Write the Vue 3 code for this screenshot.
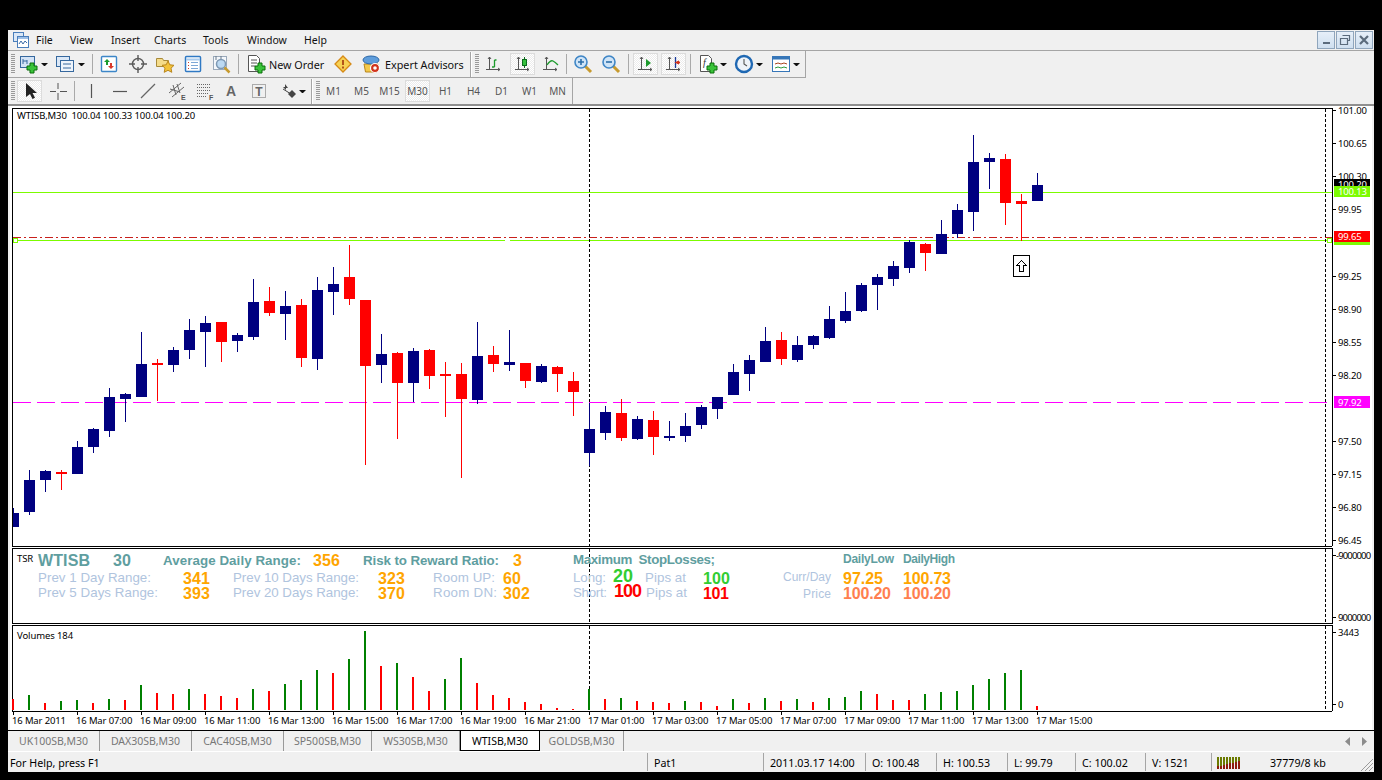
<template>
  <div class="terminal">
    <!-- menu -->
    <div class="menubar">
      <svg class="appicon" width="16" height="16" viewBox="0 0 16 16">
        <rect x="0.5" y="0.5" width="10" height="9" fill="#dbe8f7" stroke="#4a7ebb" />
        <rect x="4.5" y="4.5" width="11" height="11" fill="#fff" stroke="#4a7ebb" />
        <rect x="5" y="5" width="10" height="2" fill="#9dbfe6" />
        <path d="M6 12l2-3 2 3 2-3 2 2" fill="none" stroke="#3c6ca8" />
      </svg>
      <span v-for="m in menu" :key="m.t" class="menuitem" :style="m.style">{{ m.t }}</span>
      <div class="winbtns">
        <div class="winbtn"><i class="glyph-min"></i></div>
        <div class="winbtn">
          <svg width="12" height="12" viewBox="0 0 12 12">
            <path d="M3.5 1.5h7v5h-2M1.5 4.5h7v6h-7z" fill="none" stroke="#5b6b7c" stroke-width="1.2" />
          </svg>
        </div>
        <div class="winbtn">
          <svg width="12" height="12" viewBox="0 0 12 12">
            <path d="M2 2l8 8M10 2l-8 8" stroke="#5b6b7c" stroke-width="2.2" />
          </svg>
        </div>
      </div>
    </div>

    <!-- toolbars -->
    <div class="toolrow row1">
      <template v-for="(it, i) in row1" :key="i">
        <span v-if="it.label" class="tool-label" :style="it.style">{{ it.label }}</span>
        <div v-else :class="it.cls" :style="it.style">
          <svg v-if="it.icon" width="20" height="20" viewBox="0 0 20 20" v-html="icons[it.icon]"></svg>
        </div>
      </template>
    </div>
    <div class="toolrow row2">
      <template v-for="(it, i) in row2" :key="i">
        <div v-if="it.period" :class="it.cls" :style="it.style">{{ it.period }}</div>
        <div v-else :class="it.cls" :style="it.style">
          <svg v-if="it.icon" width="20" height="20" viewBox="0 0 20 20" v-html="icons[it.icon]"></svg>
        </div>
      </template>
    </div>

    <!-- charts -->
    <div class="charts">
      <svg class="pane" width="1362" height="441" viewBox="10 106 1362 441" shape-rendering="crispEdges">
        <text class="small" x="17" y="119">WTISB,M30&#160;&#160;100.04 100.33 100.04 100.20</text>
        <rect x="13" y="192" width="1319" height="1" fill="#7cfc00" />
        <rect x="13" y="240" width="1319" height="1" fill="#7cfc00" />
        <rect x="505" y="240" width="5" height="1" fill="#fff" />
        <rect x="13.5" y="238.5" width="4" height="4" fill="#fff" stroke="#7cfc00" />
        <rect x="1327.5" y="238.5" width="4" height="4" fill="#fff" stroke="#7cfc00" />
        <path d="M13 237.5H1332" stroke="#c8201c" stroke-dasharray="8 3 2 3" />
        <path d="M13 402.5H1332" stroke="#ff00ff" stroke-dasharray="18 6" />
        <path d="M589.5 109V546M1325.5 109V546" stroke="#000" stroke-dasharray="3 2" />

        <g v-for="(c, i) in candles" :key="i" :fill="c[4] === 'b' ? '#000080' : '#ff0000'">
          <rect :x="13 + 16 * i" :y="c[0]" width="1" :height="c[3] - c[0]" />
          <rect :x="8 + 16 * i" :y="c[1]" width="11" :height="c[2] - c[1]" />
        </g>

        <rect x="1013.5" y="255.5" width="16" height="21" fill="#fff" stroke="#000" />
        <path d="M1021.5 260.5l5 5h-3v6h-4v-6h-3z" fill="#fff" stroke="#000" />

        <rect x="10" y="106" width="3" height="441" fill="#fff" />
        <rect x="12" y="108" width="1320" height="1" />
        <rect x="12" y="108" width="1" height="438" />
        <rect x="1332" y="108" width="1" height="438" />
        <rect x="12" y="546" width="1320" height="1" />

        <g v-for="p in prices" :key="p.t">
          <rect x="1333" :y="p.y" width="3" height="1" />
          <text class="axis" x="1338" :y="p.y + 4">{{ p.t }}</text>
        </g>
        <rect x="1334" y="179" width="36" height="9" fill="#000" />
        <text class="axis on-dark" x="1338" y="188">100.20</text>
        <rect x="1334" y="186" width="36" height="11" fill="#7cfc00" />
        <text class="axis on-dark" x="1338" y="195">100.13</text>
        <rect x="1334" y="240" width="36" height="5" fill="#7cfc00" />
        <rect x="1334" y="231" width="36" height="11" fill="#ff0000" />
        <text class="axis on-dark" x="1338" y="240">99.65</text>
        <rect x="1334" y="396" width="36" height="12" fill="#ff00ff" />
        <text class="axis on-dark" x="1338" y="406">97.92</text>
      </svg>

      <svg class="pane" width="1362" height="78" viewBox="10 547 1362 78" shape-rendering="crispEdges">
        <rect x="12" y="548" width="1320" height="1" />
        <rect x="12" y="548" width="1" height="76" />
        <rect x="1332" y="548" width="1" height="76" />
        <rect x="12" y="623" width="1320" height="1" />
        <path d="M589.5 549V623M1325.5 549V623" stroke="#000" stroke-dasharray="3 2" />
        <text class="small" x="17" y="562">TSR</text>
        <text
          v-for="l in labels"
          :key="l.t + l.x"
          :class="l.c"
          :x="l.x"
          :y="l.y"
          :textLength="l.w"
        >{{ l.t }}</text>
        <rect x="1333" y="555" width="3" height="1" />
        <text class="axis" x="1336" y="559" textLength="35">-9000000</text>
        <rect x="1333" y="617" width="3" height="1" />
        <text class="axis" x="1338" y="621" textLength="33">9000000</text>
      </svg>

      <svg class="pane" width="1362" height="105" viewBox="10 625 1362 105" shape-rendering="crispEdges">
        <rect x="12" y="625" width="1320" height="1" />
        <rect x="12" y="625" width="1" height="86" />
        <rect x="1332" y="625" width="1" height="86" />
        <rect x="12" y="711" width="1320" height="1" />
        <path d="M589.5 626V711M1325.5 626V711" stroke="#000" stroke-dasharray="3 2" />
        <text class="small" x="17" y="639">Volumes 184</text>
        <rect
          v-for="(v, i) in volumes"
          :key="i"
          :x="12 + 16 * i"
          :y="710 - v[0]"
          width="2"
          :height="v[0]"
          :fill="v[1] === 'g' ? '#008000' : '#ff0000'"
        />
        <g v-for="(t, i) in times" :key="t">
          <rect :x="13 + 64 * i" y="712" width="1" height="3" />
          <text class="axis" :x="12 + 64 * i" y="724">{{ t }}</text>
        </g>
        <rect x="1333" y="632" width="3" height="1" />
        <text class="axis" x="1338" y="636">3443</text>
        <rect x="1333" y="704" width="3" height="1" />
        <text class="axis" x="1338" y="708">0</text>
      </svg>
    </div>

    <!-- symbol tabs -->
    <div class="tabs">
      <div v-for="t in tabs" :key="t.t" :class="['tab', { active: t.active }]" :style="{ width: t.w + 'px' }">{{ t.t }}</div>
      <div class="tabscroll">
        <svg width="6" height="9" viewBox="0 0 6 9"><path d="M5 0v9L0 4.5z" fill="#8c8c8c" /></svg>
        <svg width="6" height="9" viewBox="0 0 6 9"><path d="M1 0v9l5-4.5z" fill="#8c8c8c" /></svg>
      </div>
    </div>

    <!-- status bar -->
    <div class="status">
      <div v-for="s in status" :key="s.t" class="cell" :style="{ width: s.w + 'px' }">{{ s.t }}</div>
      <div class="cell conn">
        <svg width="26" height="13" viewBox="0 0 26 13" shape-rendering="crispEdges">
          <g v-for="n in 8" :key="n">
            <rect :x="(n - 1) * 3" y="1" width="2" height="12" fill="#6b7a00" />
            <rect :x="(n - 1) * 3" :y="11 - Math.round(n * 0.7)" width="2" :height="2 + Math.round(n * 0.7)" fill="#8e1c0c" />
          </g>
        </svg>
      </div>
      <div class="memory">37779/8 kb</div>
      <svg class="grip" width="16" height="16" viewBox="0 0 16 16">
        <path d="M15 3L3 15M15 7L7 15M15 11l-4 4" stroke="#9a9a9a" />
      </svg>
    </div>
  </div>
</template>

<script setup>
// lay items out left to right, from their left edge on the screen
const place = (items, start) => {
  let right = start
  return items.map((it) => {
    const w = it.w ?? 20
    const style = { marginLeft: it.l - right + 'px', width: w + 'px' }
    right = it.l + w
    return { ...it, style }
  })
}

const menu = place(
  [
    { t: 'File', l: 36, w: 15 },
    { t: 'View', l: 70, w: 22 },
    { t: 'Insert', l: 111, w: 25 },
    { t: 'Charts', l: 154, w: 30 },
    { t: 'Tools', l: 203, w: 26 },
    { t: 'Window', l: 247, w: 38 },
    { t: 'Help', l: 304, w: 21 }
  ],
  32
)

const grip = (l) => ({ cls: 'grip-bar', l, w: 4 })
const sep = (l) => ({ cls: 'sep', l, w: 1 })
const drop = (l) => ({ cls: 'drop', l, w: 7 })
const btn = (icon, l) => ({ cls: 'btn', icon, l })
const checked = (icon, l) => ({ cls: 'btn checked', icon, l, w: 25 })

const row1 = place(
  [
    grip(11),
    btn('newChart', 19), drop(41),
    btn('profiles', 55), drop(78),
    sep(92),
    btn('market', 99), btn('nav', 128), btn('fav', 155), btn('term', 183), btn('tester', 212),
    sep(238),
    btn('order', 246),
    { label: 'New Order', l: 269, w: 60 },
    btn('warn', 333),
    btn('expert', 361),
    { label: 'Expert Advisors', l: 385, w: 82 },
    { cls: 'edge', l: 470, w: 2 },
    grip(475),
    btn('bars', 484), checked('candle', 510), btn('line', 541),
    sep(566),
    btn('zoomIn', 573), btn('zoomOut', 601),
    sep(628),
    checked('auto', 633), checked('shift', 661),
    sep(690),
    btn('indic', 698), drop(720),
    btn('clock', 734), drop(756),
    btn('tmpl', 771), drop(793)
  ],
  8
)

const periods = ['M1', 'M5', 'M15', 'M30', 'H1', 'H4', 'D1', 'W1', 'MN']

const row2 = place(
  [
    grip(11),
    checked('cursor', 17),
    btn('cross', 48),
    sep(74),
    btn('vline', 81), btn('hline', 110), btn('trend', 138), btn('channel', 167), btn('fibo', 195),
    btn('textA', 221), btn('label', 249), btn('arrows', 279), drop(299),
    { cls: 'edge', l: 311, w: 2 },
    grip(316),
    ...periods.map((p, i) => ({
      period: p,
      cls: p === 'M30' ? 'period checked' : 'period',
      l: 321 + 28 * i,
      w: 25
    }))
  ],
  8
)

const plus = (x, y) =>
  `<path d="M${x - 2} ${y - 5}h4v3h3v4h-3v3h-4v-3h-3v-4h3z" fill="#39c339" stroke="#0b6e0b"/>`
const axes = '<path d="M5.500 3v13M2 15.500h14M4 5l1.500-2L7 5M14 14l2 1.500-2 1.500" fill="none" stroke="#555"/>'
const lens = (sign) =>
  `<path d="M12 12l6 6" stroke="#c79a2e" stroke-width="3"/><circle cx="8" cy="8" r="6" fill="#cfe4f7" stroke="#3f86c6" stroke-width="1.6"/><path d="${sign}" stroke="#2c6ea8" stroke-width="1.6"/>`

const icons = {
  newChart: `<rect x="1.5" y="2.5" width="14" height="11" fill="#d3e3f6" stroke="#36689e"/><path d="M4 5v5M8 6v4M4 7h4" stroke="#36689e"/>${plus(13, 14)}`,
  profiles: `<rect x="1.5" y="2.5" width="13" height="10" fill="#dbe8f7" stroke="#36689e"/><rect x="5.5" y="6.5" width="13" height="11" fill="#eef4fb" stroke="#36689e"/><path d="M8 10h8M8 14h8" stroke="#36689e"/>`,
  market: `<rect x="2.5" y="2.5" width="15" height="15" rx="1" fill="#fff" stroke="#3c86c8" stroke-width="1.4"/><path d="M8 5l3 3H9v3H7V8H5z" fill="#1a9a2c"/><path d="M12 15l-3-3h2V9h2v3h2z" fill="#d8392a"/>`,
  nav: '<circle cx="10" cy="10" r="5.5" fill="none" stroke="#5a5a5a" stroke-width="1.4"/><path d="M10 1v6M10 13v6M1 10h6M13 10h6" stroke="#5a5a5a" stroke-width="1.4"/>',
  fav: '<path d="M1.5 4.5h6l1 2h5v6h-12z" fill="#f5dc8a" stroke="#a88a3a"/><path d="M13 7l1.8 3.8 4.2.5-3 2.9.8 4.1-3.8-2-3.8 2 .8-4.1-3-2.9 4.2-.5z" fill="#f3c33a" stroke="#b9861c"/>',
  term: '<rect x="2.5" y="2.5" width="15" height="15" rx="1" fill="#fff" stroke="#2f79c4" stroke-width="1.5"/><path d="M3 5.5h14" stroke="#a9cbed" stroke-width="2"/><path d="M8 8.5h7M8 11.5h7M8 14.5h7" stroke="#7ea8d6"/><path d="M5 8.5h1M5 11.5h1M5 14.5h1" stroke="#d23a2a"/>',
  tester: '<rect x="1.5" y="2.5" width="13" height="13" fill="#f4f7fb" stroke="#9aa9ba"/><path d="M4 2v4M9 2v4" stroke="#6a7a8a"/><circle cx="9" cy="10" r="4.5" fill="#bcd9f2" stroke="#7d98b3" stroke-width="1.5"/><path d="M12.5 13.5l5 5" stroke="#c79a2e" stroke-width="2.5"/>',
  order: `<path d="M2.5 1.5h8l3 3v13h-11z" fill="#fff" stroke="#555"/><path d="M5 6h6M5 9h6M5 12h4" stroke="#555"/>${plus(14, 14)}`,
  warn: '<path d="M10 2l8 8-8 8-8-8z" fill="#f7d154" stroke="#d68a16" stroke-width="1.3"/><path d="M10 6v5" stroke="#b3541a" stroke-width="2"/><path d="M10 12.5v2" stroke="#b3541a" stroke-width="2"/>',
  expert: '<path d="M3 10h14l-1.5 8h-11z" fill="#f3c94b" stroke="#b9861c"/><ellipse cx="10" cy="6" rx="8" ry="4" fill="#5f9ddb" stroke="#2b67a8"/><circle cx="14" cy="14" r="4.5" fill="#d1341c" stroke="#fff" stroke-width="1.2"/><circle cx="14" cy="14" r="1.8" fill="#fff"/>',
  bars: `${axes}<path d="M10.500 13V6M10.500 13H8M10.500 6h2" fill="none" stroke="#1c9a2c" stroke-width="1.3"/>`,
  candle: `${axes}<path d="M11.500 3v11" stroke="#0c6e1c"/><rect x="9.500" y="5.500" width="4" height="6" fill="#35c03d" stroke="#0c6e1c"/>`,
  line: `${axes}<path d="M6 11c2-3 4-5 6-4s3 2 5 4" fill="none" stroke="#1c9a2c" stroke-width="1.3"/>`,
  zoomIn: lens('M5 8h6M8 5v6'),
  zoomOut: lens('M5 8h6'),
  auto: `${axes}<path d="M10 5l5 4-5 4z" fill="#1c9a2c"/>`,
  shift: `${axes}<path d="M11.500 3v11" stroke="#1a3a9a" stroke-width="1.3"/><path d="M12 8.500h4M15 7l-3 1.500 3 1.500" fill="none" stroke="#d1341c" stroke-width="1.3"/>`,
  indic: `<path d="M2.5 1.5h8l3 3v13h-11z" fill="#fff" stroke="#555"/><text x="5" y="12" font-size="10" font-style="italic" font-family="Liberation Serif, serif" fill="#333">f</text>${plus(14, 14)}`,
  clock: '<circle cx="10" cy="10" r="8" fill="#eef3f9" stroke="#1f68b3" stroke-width="2.4"/><path d="M10 5v5l3 2" fill="none" stroke="#555" stroke-width="1.1"/>',
  tmpl: '<rect x="1.5" y="2.5" width="17" height="15" fill="#fff" stroke="#3676b8"/><rect x="2" y="3" width="16" height="2.5" fill="#3676b8"/><path d="M4 10l3-1 3 1 3-1 3 1" fill="none" stroke="#a8441e"/><path d="M4 14l3-1 3 1 3-1 3 1" fill="none" stroke="#2c9a3a"/>',
  cursor: '<path d="M6 2v14l4-3 2.5 5 2.5-1.2L12.500 12H17z" fill="#222"/>',
  cross: '<path d="M10 2v6M10 12v7M2 10.500h6M12 10.500h7" stroke="#555"/>',
  vline: '<path d="M10.500 3v14" stroke="#555" stroke-width="1.2"/>',
  hline: '<path d="M3 10.500h14" stroke="#555" stroke-width="1.2"/>',
  trend: '<path d="M3 17L17 3" stroke="#666" stroke-width="1.2"/>',
  channel: '<path d="M2 12L14 2M5 16L17 6M6 4l3 10M10 3l3 9M3 8l10 3" stroke="#666" fill="none"/><text x="14" y="19" font-size="7" font-family="Liberation Sans, sans-serif" font-weight="700" fill="#555">E</text>',
  fibo: '<path d="M2 3.500h13M2 6.500h13M2 9.500h13M2 12.500h11M2 15.500h9" stroke="#666" stroke-dasharray="1 1"/><text x="14" y="19" font-size="7" font-family="Liberation Sans, sans-serif" font-weight="700" fill="#555">F</text>',
  textA: '<text x="10" y="15" text-anchor="middle" font-size="14" font-weight="700" font-family="Liberation Sans, sans-serif" fill="#666">A</text>',
  label: '<rect x="3.500" y="3.500" width="13" height="13" fill="none" stroke="#666" stroke-dasharray="1 1"/><text x="10" y="15" text-anchor="middle" font-size="12" font-weight="700" font-family="Liberation Sans, sans-serif" fill="#666">T</text>',
  arrows: '<path d="M6 3l3 4H7v2L4 6h2z" fill="#444"/><path d="M4 8l8 5" stroke="#444"/><path d="M13 9l4 4-4 4-4-4z" fill="#444"/>'
}

// candles: wick top, body top, body bottom, wick bottom, colour
const candles = [
  [508, 513, 527, 527, 'b'], [470, 480, 512, 515, 'b'], [470, 471, 480, 492, 'b'], [470, 472, 474, 490, 'r'],
  [441, 447, 474, 474, 'b'], [428, 429, 447, 453, 'b'], [388, 397, 431, 437, 'b'], [393, 394, 399, 422, 'b'],
  [332, 364, 397, 397, 'b'], [359, 363, 365, 401, 'r'], [347, 350, 365, 372, 'b'], [319, 330, 350, 359, 'b'],
  [316, 323, 332, 367, 'b'], [322, 322, 342, 362, 'r'], [333, 335, 341, 352, 'b'], [279, 302, 337, 340, 'b'],
  [287, 301, 313, 316, 'r'], [291, 306, 314, 340, 'b'], [299, 305, 358, 367, 'r'], [277, 290, 359, 370, 'b'],
  [267, 284, 292, 315, 'b'], [245, 277, 299, 305, 'r'], [300, 300, 366, 465, 'r'], [334, 354, 365, 383, 'b'],
  [352, 353, 383, 439, 'r'], [348, 351, 383, 402, 'b'], [349, 350, 376, 389, 'r'], [362, 374, 376, 417, 'r'],
  [363, 374, 399, 478, 'r'], [322, 356, 400, 404, 'b'], [346, 355, 364, 372, 'r'], [330, 362, 365, 371, 'b'],
  [363, 363, 381, 388, 'r'], [364, 366, 382, 383, 'b'], [366, 367, 374, 392, 'r'], [372, 381, 392, 416, 'r'],
  [403, 429, 453, 466, 'b'], [406, 412, 433, 440, 'b'], [399, 413, 438, 441, 'r'], [416, 419, 439, 440, 'b'],
  [411, 420, 437, 455, 'r'], [421, 436, 438, 441, 'b'], [413, 426, 436, 442, 'b'], [405, 407, 425, 429, 'b'],
  [397, 397, 409, 419, 'b'], [364, 372, 395, 395, 'b'], [355, 360, 374, 391, 'b'], [327, 341, 362, 362, 'b'],
  [332, 340, 359, 365, 'r'], [336, 345, 360, 362, 'b'], [335, 336, 345, 349, 'b'], [306, 319, 338, 339, 'b'],
  [292, 311, 321, 323, 'b'], [283, 285, 311, 312, 'b'], [274, 277, 285, 310, 'b'], [261, 266, 279, 286, 'b'],
  [240, 242, 268, 273, 'b'], [243, 244, 253, 271, 'r'], [220, 234, 254, 254, 'b'], [204, 210, 234, 238, 'b'],
  [135, 162, 212, 231, 'b'], [153, 158, 162, 189, 'b'], [154, 159, 203, 225, 'r'], [194, 201, 204, 241, 'r'],
  [173, 185, 201, 201, 'b']
]

const volHeights = [
  11, 15, 7, 9, 10, 7, 11, 10, 25, 17, 16, 21, 16, 14, 12, 21, 19, 26, 30, 40, 37, 51, 79, 44, 47, 33, 19, 31, 52, 27, 15, 12, 8,
  6, 2, 1, 21, 11, 12, 9, 8, 7, 9, 8, 4, 11, 7, 12, 9, 11, 8, 12, 13, 19, 16, 10, 10, 16, 18, 19, 25, 31, 37, 40, 4
]
const volColors = 'rgrggrgrgrrgrrrgrgggrggrgrrgg' + 'rrrrrrr' + 'grgrrrgrrgrgrgrgggrrrgggggggr'
const volumes = volHeights.map((h, i) => [h, volColors[i]])

const prices = [
  '101.00', '100.65', '100.30', '99.95', '', '99.25', '98.90', '98.55', '98.20', '', '97.50', '97.15', '96.80', '96.45'
]
  .map((t, i) => ({ t, y: Math.round(110 + 33.1 * i) }))
  .filter((p) => p.t)

const times = [
  '16 Mar 2011', '16 Mar 07:00', '16 Mar 09:00', '16 Mar 11:00', '16 Mar 13:00', '16 Mar 15:00', '16 Mar 17:00', '16 Mar 19:00',
  '16 Mar 21:00', '17 Mar 01:00', '17 Mar 03:00', '17 Mar 05:00', '17 Mar 07:00', '17 Mar 09:00', '17 Mar 11:00', '17 Mar 13:00',
  '17 Mar 15:00'
]

// the TSR indicator writes these as text objects on the sub window
const labels = [
  { t: 'WTISB', x: 38, y: 566, w: 52, c: 'head big' },
  { t: '30', x: 113, y: 566, w: 18, c: 'head big' },
  { t: 'Average Daily Range:', x: 163, y: 565, w: 138, c: 'head' },
  { t: '356', x: 313, y: 566, w: 27, c: 'num orange' },
  { t: 'Risk to Reward Ratio:', x: 363, y: 565, w: 136, c: 'head' },
  { t: '3', x: 513, y: 566, w: 9, c: 'num orange' },
  { t: 'Prev 1 Day Range:', x: 38, y: 582, w: 113, c: 'pale' },
  { t: '341', x: 183, y: 584, w: 27, c: 'num orange' },
  { t: 'Prev 10 Days Range:', x: 233, y: 582, w: 126, c: 'pale' },
  { t: '323', x: 378, y: 584, w: 27, c: 'num orange' },
  { t: 'Room UP:', x: 433, y: 582, w: 62, c: 'pale' },
  { t: '60', x: 503, y: 584, w: 18, c: 'num orange' },
  { t: 'Prev 5 Days Range:', x: 38, y: 597, w: 120, c: 'pale' },
  { t: '393', x: 183, y: 599, w: 27, c: 'num orange' },
  { t: 'Prev 20 Days Range:', x: 233, y: 597, w: 126, c: 'pale' },
  { t: '370', x: 378, y: 599, w: 27, c: 'num orange' },
  { t: 'Room DN:', x: 433, y: 597, w: 64, c: 'pale' },
  { t: '302', x: 503, y: 599, w: 27, c: 'num orange' },
  { t: 'Maximum\u00a0 StopLosses;', x: 573, y: 564, w: 142, c: 'head' },
  { t: 'Long:', x: 573, y: 582, w: 33, c: 'pale' },
  { t: '20', x: 613, y: 582, w: 20, c: 'num large green' },
  { t: 'Pips at', x: 645, y: 582, w: 41, c: 'pale' },
  { t: '100', x: 703, y: 584, w: 27, c: 'num green' },
  { t: 'Short:', x: 573, y: 597, w: 34, c: 'pale' },
  { t: '100', x: 614, y: 597, w: 28, c: 'num large red' },
  { t: 'Pips at', x: 646, y: 597, w: 41, c: 'pale' },
  { t: '101', x: 703, y: 599, w: 26, c: 'num red' },
  { t: 'DailyLow', x: 843, y: 563, w: 51, c: 'head sm' },
  { t: 'DailyHigh', x: 903, y: 563, w: 52, c: 'head sm' },
  { t: 'Curr/Day', x: 783, y: 581, w: 48, c: 'pale sm' },
  { t: '97.25', x: 843, y: 584, w: 40, c: 'num orange' },
  { t: '100.73', x: 903, y: 584, w: 48, c: 'num orange' },
  { t: 'Price', x: 803, y: 598, w: 28, c: 'pale sm' },
  { t: '100.20', x: 843, y: 599, w: 48, c: 'num coral' },
  { t: '100.20', x: 903, y: 599, w: 48, c: 'num coral' }
]

const tabs = [
  { t: 'UK100SB,M30', w: 92 },
  { t: 'DAX30SB,M30', w: 92 },
  { t: 'CAC40SB,M30', w: 92 },
  { t: 'SP500SB,M30', w: 88 },
  { t: 'WS30SB,M30', w: 88 },
  { t: 'WTISB,M30', w: 80, active: true },
  { t: 'GOLDSB,M30', w: 84 }
]

const status = [
  { t: 'For Help, press F1', w: 640 },
  { t: 'Pat1', w: 116 },
  { t: '2011.03.17 14:00', w: 102 },
  { t: 'O: 100.48', w: 71 },
  { t: 'H: 100.53', w: 71 },
  { t: 'L: 99.79', w: 68 },
  { t: 'C: 100.02', w: 70 },
  { t: 'V: 1521', w: 66 }
]
</script>

<style>
html,
body {
  margin: 0;
  background: #000;
  overflow: hidden;
}
</style>

<style scoped>
.terminal {
  position: relative;
  width: 1366px;
  height: 742px;
  margin: 30px 0 0 8px;
  background: #f0f0f0;
  font-family: "Noto Sans", sans-serif;
  font-size: 10.5px;
  color: #111;
  overflow: hidden;
}

.menubar {
  display: flex;
  align-items: center;
  height: 20px;
  border-bottom: 1px solid #a5a5a5;
}

.appicon {
  margin-left: 5px;
  margin-right: 3px;
  flex: none;
}

.menuitem {
  flex: none;
  white-space: nowrap;
}

.winbtns {
  display: flex;
  gap: 1px;
  margin-left: auto;
  margin-right: 1px;
}

.winbtn {
  display: flex;
  align-items: center;
  justify-content: center;
  width: 16px;
  height: 16px;
  border: 1px solid #8fa5bc;
  background: linear-gradient(#e6eff9, #cfdfef);
}

.glyph-min {
  display: block;
  width: 7px;
  height: 2px;
  margin-top: 6px;
  background: #5b6b7c;
}

.toolrow {
  display: flex;
  align-items: center;
  box-sizing: border-box;
  height: 26px;
}

.row1 {
  width: 798px;
  height: 27px;
  border-bottom: 1px solid #a5a5a5;
  border-right: 1px solid #a5a5a5;
}

.row2 {
  width: 565px;
  border-right: 1px solid #a5a5a5;
}

.btn {
  display: flex;
  align-items: center;
  justify-content: center;
  flex: none;
  box-sizing: border-box;
  height: 22px;
}

.checked {
  background: repeating-conic-gradient(#fff 0 25%, #ececec 0 50%) 0 0 / 2px 2px;
  border: 1px solid #fff;
  outline: 1px solid #dcdcdc;
  outline-offset: -1px;
}

.grip-bar {
  flex: none;
  height: 20px;
  background: repeating-linear-gradient(#9a9a9a 0 1px, #f0f0f0 1px 2px);
}

.sep {
  flex: none;
  height: 20px;
  background: #a9a9a9;
}

.edge {
  flex: none;
  height: 25px;
  border-left: 1px solid #a5a5a5;
  border-right: 1px solid #fff;
  box-sizing: border-box;
}

.drop {
  flex: none;
  height: 0;
  border-top: 3px solid #111;
  border-left: 3.5px solid transparent;
  border-right: 3.5px solid transparent;
  box-sizing: border-box;
}

.tool-label {
  flex: none;
  white-space: nowrap;
  color: #111;
  font-size: 10.8px;
}

.period {
  display: flex;
  align-items: center;
  justify-content: center;
  flex: none;
  box-sizing: border-box;
  height: 22px;
  font-size: 10px;
  color: #555;
}

.charts {
  display: flex;
  flex-direction: column;
  box-sizing: border-box;
  width: 1366px;
  height: 626px;
  padding: 0 2px;
  border-top: 2px solid #8f8f8f;
  background: #f0f0f0;
}

.pane {
  display: block;
  flex: none;
  background: #fff;
}

.small,
.axis {
  font-family: "Noto Sans", sans-serif;
  font-size: 9.5px;
  letter-spacing: -0.15px;
  fill: #000;
}

.small {
  letter-spacing: -0.1px;
}

.on-dark {
  fill: #fff;
}

.head,
.pale,
.num {
  font-family: "Liberation Sans", sans-serif;
}

.head {
  font-size: 13.33px;
  font-weight: 700;
  fill: #5f9ea0;
}

.head.big {
  font-size: 16px;
}

.head.sm {
  font-size: 12px;
}

.pale {
  font-size: 13.33px;
  fill: #b0c4de;
}

.pale.sm {
  font-size: 12px;
}

.num {
  font-size: 16px;
  font-weight: 700;
}

.num.large {
  font-size: 18px;
}

.orange {
  fill: #ffa500;
}

.coral {
  fill: #ff7f50;
}

.green {
  fill: #32cd32;
}

.red {
  fill: #ff0000;
}

.tabs {
  display: flex;
  box-sizing: border-box;
  height: 21px;
  border-top: 1px solid #000;
  background: #f0f0f0;
}

.tab {
  display: flex;
  align-items: center;
  justify-content: center;
  flex: none;
  box-sizing: border-box;
  height: 20px;
  border-right: 1px solid #999;
  color: #777;
}

.tab.active {
  background: #fff;
  color: #000;
  border-left: 1px solid #000;
  border-right: 1px solid #000;
  border-bottom: 1px solid #000;
}

.tabscroll {
  display: flex;
  gap: 10px;
  align-items: center;
  margin-left: auto;
  margin-right: 7px;
}

.status {
  display: flex;
  align-items: center;
  position: relative;
  box-sizing: border-box;
  height: 21px;
  border-top: 1px solid #fff;
  background: #f0f0f0;
  color: #000;
  font-size: 10.7px;
}

.cell {
  display: flex;
  align-items: center;
  flex: none;
  box-sizing: border-box;
  height: 18px;
  padding-top: 2px;
  padding-left: 6px;
  border-right: 1px solid #a5a5a5;
  white-space: nowrap;
}

.cell:first-child {
  padding-left: 2px;
}

.conn {
  width: 52px;
  padding-left: 5px;
  padding-top: 0;
  border-right: none;
}

.memory {
  margin-left: 6px;
  padding-top: 2px;
  white-space: nowrap;
}

.grip {
  position: absolute;
  right: 0;
  bottom: 0;
}
</style>
